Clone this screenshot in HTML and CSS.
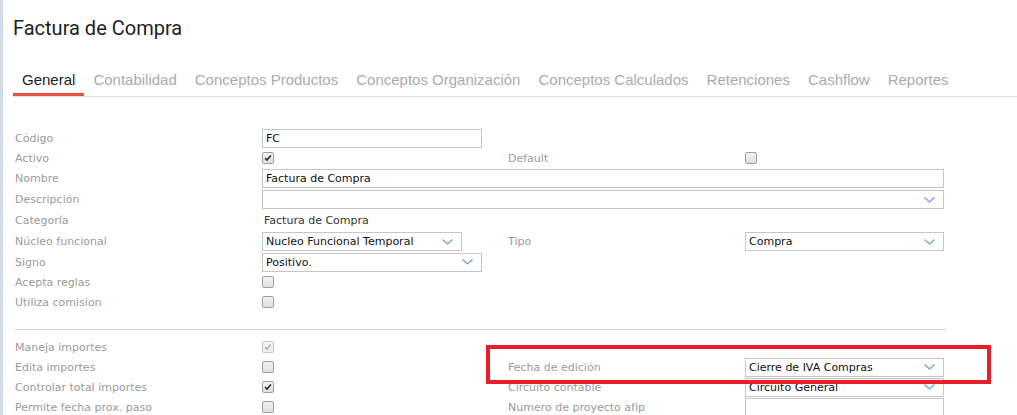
FILE: index.html
```html
<!DOCTYPE html>
<html lang="es">
<head>
<meta charset="utf-8">
<title>Factura de Compra</title>
<link rel="stylesheet" href="styles.css">
</head>
<body>
<div class="page">
  <h1 class="title">Factura de Compra</h1>
  <nav class="tabs">
    <span class="tab active">General</span>
    <span class="tab">Contabilidad</span>
    <span class="tab">Conceptos Productos</span>
    <span class="tab">Conceptos Organización</span>
    <span class="tab">Conceptos Calculados</span>
    <span class="tab">Retenciones</span>
    <span class="tab">Cashflow</span>
    <span class="tab">Reportes</span>
  </nav>

  <div class="form">
    <div class="grid grid-a">
      <span class="label">Código</span>
      <div class="field"><span class="input w220">FC</span></div>
      <span></span><span></span>

      <span class="label">Activo</span>
      <div class="field"><span class="cb checked"><svg viewBox="0 0 12 12"><polyline points="2.5,6.2 4.8,8.5 9.5,3"/></svg></span></div>
      <span class="label">Default</span>
      <div class="field"><span class="cb"></span></div>

      <span class="label">Nombre</span>
      <div class="field span3"><span class="input full">Factura de Compra</span></div>

      <span class="label">Descripción</span>
      <div class="field span3"><span class="input select full"><span class="val"></span><svg class="chev" viewBox="0 0 11 6"><polyline points="0.5,0.5 5.5,5 10.5,0.5"/></svg></span></div>

      <span class="label">Categoría</span>
      <div class="field"><span class="plain">Factura de Compra</span></div>
      <span></span><span></span>

      <span class="label">Núcleo funcional</span>
      <div class="field"><span class="input select w200"><span class="val">Nucleo Funcional Temporal</span><svg class="chev" viewBox="0 0 11 6"><polyline points="0.5,0.5 5.5,5 10.5,0.5"/></svg></span></div>
      <span class="label">Tipo</span>
      <div class="field"><span class="input select full"><span class="val">Compra</span><svg class="chev" viewBox="0 0 11 6"><polyline points="0.5,0.5 5.5,5 10.5,0.5"/></svg></span></div>

      <span class="label">Signo</span>
      <div class="field"><span class="input select w220"><span class="val">Positivo.</span><svg class="chev" viewBox="0 0 11 6"><polyline points="0.5,0.5 5.5,5 10.5,0.5"/></svg></span></div>
      <span></span><span></span>

      <span class="label">Acepta reglas</span>
      <div class="field"><span class="cb"></span></div>
      <span></span><span></span>

      <span class="label">Utiliza comision</span>
      <div class="field"><span class="cb"></span></div>
      <span></span><span></span>
    </div>

    <hr class="sep">

    <div class="grid grid-b">
      <span class="label">Maneja importes</span>
      <div class="field"><span class="cb checked disabled"><svg viewBox="0 0 12 12"><polyline points="2.5,6.2 4.8,8.5 9.5,3"/></svg></span></div>
      <span></span><span></span>

      <span class="label">Edita importes</span>
      <div class="field"><span class="cb"></span></div>
      <span class="label">Fecha de edición</span>
      <div class="field"><span class="input select full"><span class="val">Cierre de IVA Compras</span><svg class="chev" viewBox="0 0 11 6"><polyline points="0.5,0.5 5.5,5 10.5,0.5"/></svg></span></div>

      <span class="label">Controlar total importes</span>
      <div class="field"><span class="cb checked"><svg viewBox="0 0 12 12"><polyline points="2.5,6.2 4.8,8.5 9.5,3"/></svg></span></div>
      <span class="label">Circuito contable</span>
      <div class="field"><span class="input select full"><span class="val">Circuito General</span><svg class="chev" viewBox="0 0 11 6"><polyline points="0.5,0.5 5.5,5 10.5,0.5"/></svg></span></div>

      <span class="label">Permite fecha prox. paso</span>
      <div class="field"><span class="cb"></span></div>
      <span class="label">Numero de proyecto afip</span>
      <div class="field"><span class="input full"></span></div>
    </div>
  </div>

  <div class="highlight"></div>
</div>
</body>
</html>
```

FILE: styles.css
```css
html, body {
  margin: 0;
  padding: 0;
  background: #ffffff;
}

body {
  border-left: 3px solid #d3dae7;
  height: 415px;
  overflow: hidden;
  box-sizing: border-box;
}

.page {
  position: relative;
  width: 1012px;
  height: 415px;
  border-right: 2px solid #a9b4c8;
  padding-left: 10px;
  box-sizing: content-box;
}

.title {
  margin: 0;
  padding-top: 10px;
  font-family: Roboto, "Liberation Sans", sans-serif;
  font-weight: 400;
  font-size: 20px;
  line-height: 36px;
  color: #222222;
}

.tabs {
  display: flex;
  margin-top: 25px;
  border-bottom: 1px solid #dddddd;
  font-family: "Liberation Sans", Arial, sans-serif;
  font-size: 15px;
  line-height: 18px;
}

.tab {
  padding: 0 9px 4px;
  border-bottom: 3px solid transparent;
  color: #ababab;
  white-space: nowrap;
}

.tab.active {
  color: #222222;
  border-bottom-color: #e6533f;
}

.form {
  margin-top: 31px;
  margin-left: 2px;
  width: 931px;
  font-family: "DejaVu Sans", Verdana, sans-serif;
  font-size: 11px;
}

.grid {
  display: grid;
  grid-template-columns: 247px 246px 237px 199px;
  align-items: center;
}

.grid-a {
  grid-template-rows: 20px 20px 21px 21px 21px 21px 20px 20px 20px;
}

.grid-b {
  margin-top: 7px;
  grid-template-rows: 20px 20px 20px 20px;
}

.label {
  color: #9b9b9b;
  white-space: nowrap;
}

.field {
  display: flex;
  align-items: center;
}

.span3 {
  grid-column: 2 / 5;
}

.input {
  display: flex;
  align-items: center;
  box-sizing: border-box;
  height: 19px;
  border: 1px solid #c6c6c6;
  background: #ffffff;
  padding-left: 3px;
  color: #111111;
  white-space: nowrap;
}

.input.w220 { width: 220px; }
.input.w200 { width: 200px; }
.input.full { width: 100%; }

.select .val {
  flex: 1;
  overflow: hidden;
}

.chev {
  width: 11px;
  height: 6px;
  margin-right: 8px;
  flex: none;
}

.chev polyline {
  fill: none;
  stroke: #6a9ee0;
  stroke-width: 1.2;
}

.plain {
  padding-left: 2px;
  color: #333333;
}

.cb {
  display: inline-flex;
  box-sizing: border-box;
  width: 12px;
  height: 12px;
  border: 1px solid #9f9f9f;
  border-radius: 2px;
  background: linear-gradient(#f3f3f3, #dedede);
}

.cb svg {
  width: 10px;
  height: 10px;
}

.cb polyline {
  fill: none;
  stroke: #2b2b2b;
  stroke-width: 2;
}

.cb.disabled {
  border-color: #c8c8c8;
  background: linear-gradient(#f7f7f7, #ececec);
}

.cb.disabled polyline {
  stroke: #b0b0b0;
}

.sep {
  margin: 17px 0 0;
  border: 0;
  border-top: 1px solid #d0d0d0;
  height: 0;
}

.highlight {
  position: absolute;
  left: 483px;
  top: 345px;
  width: 505px;
  height: 39px;
  box-sizing: border-box;
  border: 4px solid #e81e28;
}
```
